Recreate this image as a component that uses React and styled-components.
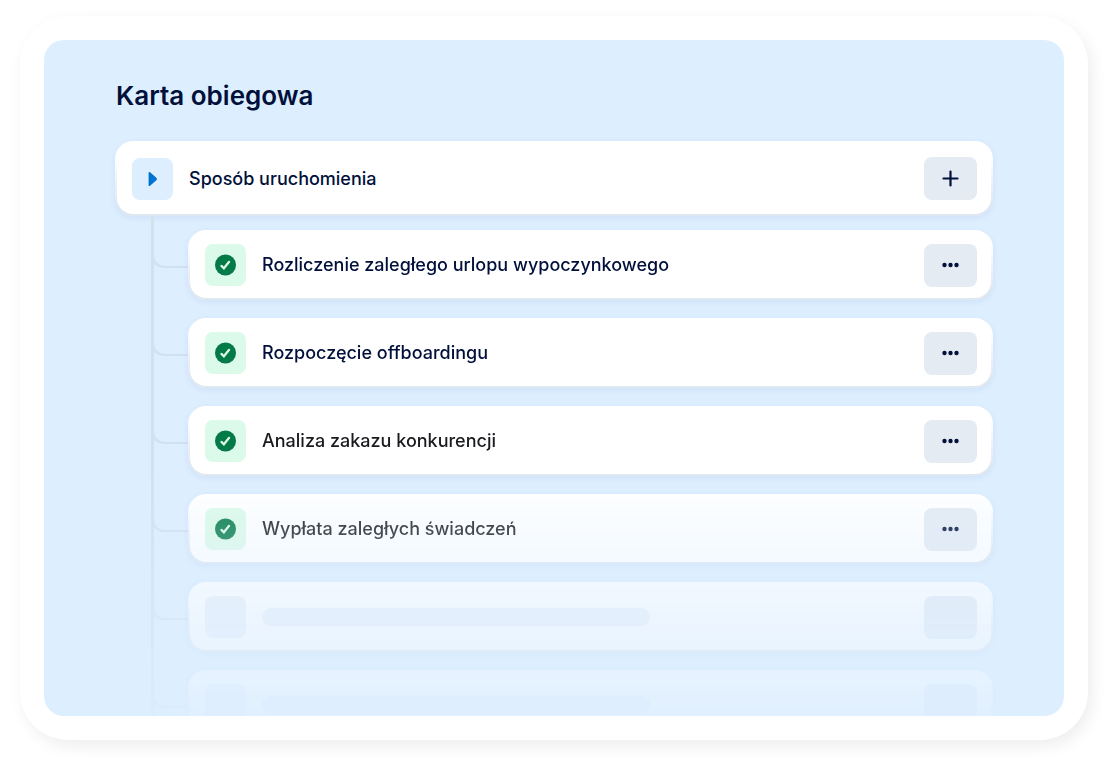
import styled, { createGlobalStyle } from "styled-components";

const GlobalStyle = createGlobalStyle`
  * {
    box-sizing: border-box;
  }
  body {
    margin: 0;
    background-color: #ffffff;
    font-family: Inter, "Liberation Sans", sans-serif;
    -webkit-font-smoothing: antialiased;
  }
`;

const Page = styled.main`
  display: flex;
  height: 100vh;
  padding: 16px 28px 32px 20px;
`;

const Frame = styled.div`
  flex: 1;
  display: flex;
  min-width: 0;
  padding: 24px;
  border-radius: 48px;
  background-color: #ffffff;
  box-shadow: 4px 6px 16px rgba(0, 0, 0, 0.07);
`;

const Panel = styled.section`
  flex: 1;
  min-width: 0;
  padding-top: 40px;
  border-radius: 20px;
  background-color: #ddeeff;
  overflow: hidden;
`;

const Title = styled.h1`
  margin: 0 72px 29px;
  font-size: 26px;
  line-height: 32px;
  font-weight: 600;
  color: #00103a;
`;

const Card = styled.div`
  flex: 1;
  display: flex;
  align-items: center;
  gap: 16px;
  min-width: 0;
  height: ${(props) => (props.$root ? 75 : 70)}px;
  padding: 0 14px 0 15px;
  border: 2px solid transparent;
  border-radius: 18px;
  background:
    linear-gradient(#ffffff, #ffffff) padding-box,
    linear-gradient(#ffffff 20%, #dfe7f0 85%) border-box;
  box-shadow: 0 2px 6px rgba(40, 80, 150, 0.08);
`;

const RootRow = styled.div`
  display: flex;
  margin: 0 71px;
`;

const Steps = styled.ul`
  margin: 0;
  padding: 0 71px 0 107px;
  list-style: none;
  mask-image: linear-gradient(#000000 254px, rgba(0, 0, 0, 0.1) 504px);
`;

const Step = styled.li`
  display: flex;
`;

const Branch = styled.div`
  width: 37px;
  border-left: 3px solid #d3e0ee;
`;

const Elbow = styled.div`
  height: ${(props) => props.$gap + 38}px;
  margin-left: -2px;
  border-left: 2px solid #d3e0ee;
  border-bottom: 2px solid #d3e0ee;
  border-bottom-left-radius: 12px;
`;

const StepBody = styled.div`
  flex: 1;
  display: flex;
  min-width: 0;
  padding-top: ${(props) => props.$gap}px;
`;

const Tile = styled.span`
  flex: none;
  display: flex;
  align-items: center;
  justify-content: center;
  width: 41px;
  height: 42px;
  border-radius: 8px;
  background-color: ${(props) => props.$color};
`;

const Label = styled.span`
  flex: 1;
  min-width: 0;
  font-size: 18px;
  line-height: 24px;
  font-weight: 500;
  color: ${(props) => props.$color};
`;

const LabelSpace = styled.div`
  flex: 1;
`;

const Placeholder = styled.div`
  width: 60%;
  height: 18px;
  border-radius: 9px;
  background-color: #ebf0f9;
`;

const Action = styled.button`
  flex: none;
  display: flex;
  align-items: center;
  justify-content: center;
  width: 53px;
  height: 43px;
  padding: 0;
  border: none;
  border-radius: 8px;
  background-color: #e4ebf3;
  color: #00103a;
  cursor: pointer;
`;

const PlayIcon = () => (
  <svg width="20" height="20" viewBox="0 0 20 20" fill="#0073d1" aria-hidden="true">
    <path d="M5.6 3.8v12.4c0 .9.8 1.2 1.5.6l6.2-5.5c.9-.8.9-1.8 0-2.6L7.1 3.2c-.7-.6-1.5-.3-1.5.6z" />
  </svg>
);

const CheckIcon = () => (
  <svg width="21" height="22" viewBox="0 0 21 22" fill="none" aria-hidden="true">
    <circle cx="10.5" cy="11" r="10.5" fill="#047a48" />
    <path
      d="M6.400 11.9l2.5 2.4 5.2-6.5"
      stroke="#dcfae9"
      strokeWidth="2.2"
      strokeLinecap="round"
    />
  </svg>
);

const PlusIcon = () => (
  <svg width="17" height="17" viewBox="0 0 17 17" aria-hidden="true">
    <path d="M8.5 1.5v14M1.5 8.5h14" stroke="currentColor" strokeWidth="2.2" strokeLinecap="round" />
  </svg>
);

const DotsIcon = () => (
  <svg width="17" height="17" viewBox="0 0 17 17" fill="currentColor" aria-hidden="true">
    <circle cx="2.5" cy="8" r="2.2" />
    <circle cx="8.5" cy="8" r="2.2" />
    <circle cx="14.5" cy="8" r="2.2" />
  </svg>
);

const steps = [
  { id: 1, name: "Rozliczenie zaległego urlopu wypoczynkowego", color: "#00103a" },
  { id: 2, name: "Rozpoczęcie offboardingu", color: "#00103a" },
  { id: 3, name: "Analiza zakazu konkurencji", color: "#1a1b1f" },
  { id: 4, name: "Wypłata zaległych świadczeń", color: "#1a1b1f" },
  { id: 5 },
  { id: 6 },
];

const StepCard = ({ step }) => {
  if (!step.name) {
    return (
      <Card>
        <Tile $color="#ebf0f9" />
        <LabelSpace>
          <Placeholder />
        </LabelSpace>
        <Action disabled aria-label="Ładowanie" />
      </Card>
    );
  }
  return (
    <Card>
      <Tile $color="#dcfae9">
        <CheckIcon />
      </Tile>
      <Label $color={step.color}>{step.name}</Label>
      <Action aria-label={`Opcje: ${step.name}`}>
        <DotsIcon />
      </Action>
    </Card>
  );
};

const App = () => {
  return (
    <>
      <GlobalStyle />
      <Page>
        <Frame>
          <Panel>
            <Title>Karta obiegowa</Title>
            <RootRow>
              <Card $root>
                <Tile $color="#ddeeff">
                  <PlayIcon />
                </Tile>
                <Label $color="#00103a">Sposób uruchomienia</Label>
                <Action aria-label="Dodaj">
                  <PlusIcon />
                </Action>
              </Card>
            </RootRow>
            <Steps>
              {steps.map((step, index) => {
                const gap = index === 0 ? 14 : 18;
                return (
                  <Step key={step.id}>
                    <Branch>
                      <Elbow $gap={gap} />
                    </Branch>
                    <StepBody $gap={gap}>
                      <StepCard step={step} />
                    </StepBody>
                  </Step>
                );
              })}
            </Steps>
          </Panel>
        </Frame>
      </Page>
    </>
  );
};

export default App;
